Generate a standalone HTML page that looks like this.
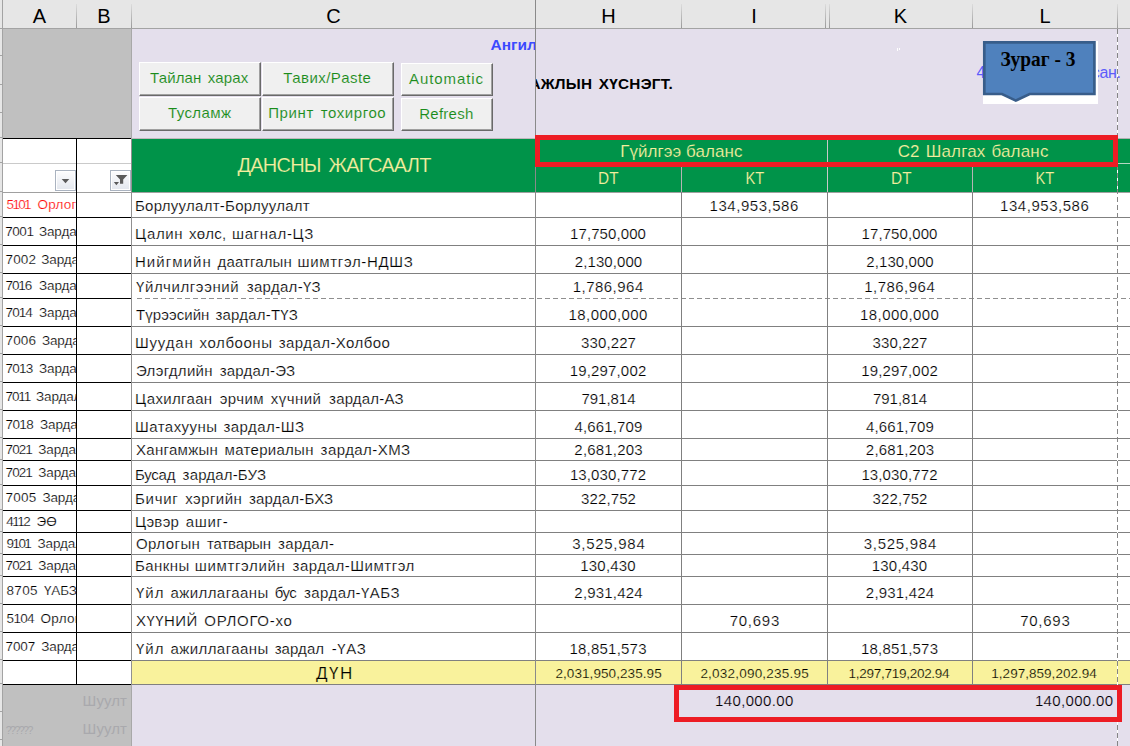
<!DOCTYPE html>
<html lang="mn"><head><meta charset="utf-8"><title>Дансны жагсаалт</title>
<style>
html,body{margin:0;padding:0;background:#fff}
body{width:1130px;height:746px;overflow:hidden;position:relative;font-family:"Liberation Sans",sans-serif;font-size:15px;color:#000}
#s{position:absolute;left:0;top:0;width:1130px;height:746px;overflow:hidden;background:#fff}
#s div,#s span{position:absolute;white-space:pre}
.h{background:#808080;height:1px}
.v{background:#808080;width:1px}
.k{background:#000}

.ch{top:3.4px;height:26px;line-height:26px;font-size:20px;text-align:center;color:#000}
.sep{top:4px;height:24px;width:1px;background:linear-gradient(#dcdcdc,#9a9a9a)}
.a{-webkit-text-stroke:.2px #fff;left:3px;width:73px;overflow:hidden;font-size:13.5px;height:18px;line-height:18px}
.btn{background:#f0f0f0;box-sizing:border-box;border-top:1px solid #fff;border-left:1px solid #fff;border-right:1px solid #696969;border-bottom:1px solid #696969;box-shadow:inset -1px -1px 0 #a0a0a0}
.bt{color:#1a8c1a;-webkit-text-stroke:.1px #f0f0f0}
.gh{color:#f3ee9e;-webkit-text-stroke:.15px #009349}
.tw{-webkit-text-stroke:.2px #fff}
.ty{-webkit-text-stroke:.2px #f9f29c}
.tp{-webkit-text-stroke:.2px #e4dfec}
</style></head><body><div id="s">

<div style="left:0;top:0;width:1130px;height:28px;background:#e6e6e6"></div>
<div style="left:0;top:28px;width:1130px;height:1px;background:#a3a3a3"></div>
<div style="left:0;top:29px;width:2px;height:717px;background:#e6e6e6"></div>
<div style="left:2px;top:0;width:1px;height:746px;background:#a3a3a3"></div>
<div style="left:0;top:55px;width:2px;height:1px;background:#a3a3a3"></div>
<div style="left:0;top:84px;width:2px;height:1px;background:#a3a3a3"></div>
<div style="left:0;top:112px;width:2px;height:1px;background:#a3a3a3"></div>
<div style="left:0;top:137px;width:2px;height:1px;background:#a3a3a3"></div>
<div style="left:0;top:162px;width:2px;height:1px;background:#a3a3a3"></div>
<div style="left:0;top:191px;width:2px;height:1px;background:#a3a3a3"></div>
<div style="left:0;top:216px;width:2px;height:1px;background:#a3a3a3"></div>
<div style="left:0;top:244px;width:2px;height:1px;background:#a3a3a3"></div>
<div style="left:0;top:272px;width:2px;height:1px;background:#a3a3a3"></div>
<div style="left:0;top:297px;width:2px;height:1px;background:#a3a3a3"></div>
<div style="left:0;top:325px;width:2px;height:1px;background:#a3a3a3"></div>
<div style="left:0;top:353px;width:2px;height:1px;background:#a3a3a3"></div>
<div style="left:0;top:381px;width:2px;height:1px;background:#a3a3a3"></div>
<div style="left:0;top:409px;width:2px;height:1px;background:#a3a3a3"></div>
<div style="left:0;top:437px;width:2px;height:1px;background:#a3a3a3"></div>
<div style="left:0;top:459px;width:2px;height:1px;background:#a3a3a3"></div>
<div style="left:0;top:484px;width:2px;height:1px;background:#a3a3a3"></div>
<div style="left:0;top:509px;width:2px;height:1px;background:#a3a3a3"></div>
<div style="left:0;top:531px;width:2px;height:1px;background:#a3a3a3"></div>
<div style="left:0;top:553px;width:2px;height:1px;background:#a3a3a3"></div>
<div style="left:0;top:575px;width:2px;height:1px;background:#a3a3a3"></div>
<div style="left:0;top:603px;width:2px;height:1px;background:#a3a3a3"></div>
<div style="left:0;top:631px;width:2px;height:1px;background:#a3a3a3"></div>
<div style="left:0;top:659px;width:2px;height:1px;background:#a3a3a3"></div>
<div style="left:0;top:683px;width:2px;height:1px;background:#a3a3a3"></div>
<div style="left:0;top:711px;width:2px;height:1px;background:#a3a3a3"></div>
<div style="left:0;top:739px;width:2px;height:1px;background:#a3a3a3"></div>
<div style="left:3px;top:29px;width:129px;height:109px;background:#c0c0c0"></div>
<div style="left:3px;top:685px;width:129px;height:61px;background:#c0c0c0"></div>
<div style="left:132px;top:29px;width:998px;height:110px;background:#e4dfec"></div>
<div style="left:132px;top:685px;width:998px;height:61px;background:#e4dfec"></div>
<div class="ch" style="left:3px;width:73px">A</div>
<div class="ch" style="left:77px;width:54px">B</div>
<div class="ch" style="left:132px;width:403px">C</div>
<div class="ch" style="left:536px;width:145px">H</div>
<div class="ch" style="left:682px;width:144px">I</div>
<div class="ch" style="left:829px;width:143px">K</div>
<div class="ch" style="left:973px;width:144px">L</div>
<div class="sep" style="left:76px"></div>
<div class="sep" style="left:131px"></div>
<div class="sep" style="left:681px"></div>
<div class="sep" style="left:825px"></div>
<div class="sep" style="left:829px"></div>
<div class="sep" style="left:972px"></div>
<div class="sep" style="left:1117px"></div>
<div style="left:132px;top:139px;width:998px;height:53px;background:#009349"></div>
<div class="gh" style="left:237.45px;top:153px;height:24px;line-height:24px;font-size:20px;letter-spacing:-0.769px;word-spacing:3px;">ДАНСНЫ ЖАГСААЛТ</div>
<div class="gh" style="left:620.20px;top:142px;height:20px;line-height:20px;font-size:17px;letter-spacing:0.065px;">Гүйлгээ баланс</div>
<div class="gh" style="left:897.65px;top:142px;height:20px;line-height:20px;font-size:17px;letter-spacing:0.188px;word-spacing:1px;">С2 Шалгах баланс</div>
<div class="gh" style="left:597.17px;top:168.5px;height:20px;line-height:20px;font-size:17px;transform:scaleX(0.902)">DT</div>
<div class="gh" style="left:743.64px;top:168.5px;height:20px;line-height:20px;font-size:17px;transform:scaleX(0.865)">KT</div>
<div class="gh" style="left:889.67px;top:168.5px;height:20px;line-height:20px;font-size:17px;transform:scaleX(0.902)">DT</div>
<div class="gh" style="left:1034.34px;top:168.5px;height:20px;line-height:20px;font-size:17px;transform:scaleX(0.865)">KT</div>
<div style="left:681px;top:167px;width:1px;height:25px;background:#b4b4b4"></div>
<div style="left:972px;top:167px;width:1px;height:25px;background:#b4b4b4"></div>
<div style="left:827px;top:140px;width:1px;height:52px;background:#c8c8c8"></div>
<div style="left:1118px;top:163px;width:12px;height:1px;background:#b4d8c2"></div>
<div style="left:1118px;top:138px;width:12px;height:1px;background:#b0b0b0"></div>
<div style="left:132px;top:661px;width:998px;height:23px;background:#f9f29c"></div>
<div style="left:3px;top:163px;width:128px;height:1px;background:#cacaca"></div>
<div class="k" style="left:3px;top:192px;width:129px;height:1px;background:#a0a0a0"></div>
<div class="h" style="left:132px;top:192px;width:998px;background:#a0a0a0"></div>
<div class="k" style="left:3px;top:217px;width:129px;height:1px"></div>
<div class="h" style="left:132px;top:217px;width:998px"></div>
<div class="k" style="left:3px;top:245px;width:129px;height:1px"></div>
<div class="h" style="left:132px;top:245px;width:998px"></div>
<div class="k" style="left:3px;top:273px;width:129px;height:1px"></div>
<div class="h" style="left:132px;top:273px;width:998px"></div>
<div class="k" style="left:3px;top:298px;width:129px;height:1px"></div>
<div style="left:137px;top:298px;width:993px;height:1px;background:repeating-linear-gradient(90deg,#8f8f8f 0 5px,#fff 5px 8px)"></div>
<div class="k" style="left:3px;top:326px;width:129px;height:1px"></div>
<div class="h" style="left:132px;top:326px;width:998px"></div>
<div class="k" style="left:3px;top:354px;width:129px;height:1px"></div>
<div class="h" style="left:132px;top:354px;width:998px"></div>
<div class="k" style="left:3px;top:382px;width:129px;height:1px"></div>
<div class="h" style="left:132px;top:382px;width:998px"></div>
<div class="k" style="left:3px;top:410px;width:129px;height:1px"></div>
<div class="h" style="left:132px;top:410px;width:998px"></div>
<div class="k" style="left:3px;top:438px;width:129px;height:1px"></div>
<div class="h" style="left:132px;top:438px;width:998px"></div>
<div class="k" style="left:3px;top:460px;width:129px;height:1px"></div>
<div class="h" style="left:132px;top:460px;width:998px"></div>
<div class="k" style="left:3px;top:485px;width:129px;height:1px"></div>
<div class="h" style="left:132px;top:485px;width:998px"></div>
<div class="k" style="left:3px;top:510px;width:129px;height:1px"></div>
<div class="h" style="left:132px;top:510px;width:998px"></div>
<div class="k" style="left:3px;top:532px;width:129px;height:1px"></div>
<div class="h" style="left:132px;top:532px;width:998px"></div>
<div class="k" style="left:3px;top:554px;width:129px;height:1px"></div>
<div class="h" style="left:132px;top:554px;width:998px"></div>
<div class="k" style="left:3px;top:576px;width:129px;height:1px"></div>
<div class="h" style="left:132px;top:576px;width:998px"></div>
<div class="k" style="left:3px;top:604px;width:129px;height:1px"></div>
<div class="h" style="left:132px;top:604px;width:998px"></div>
<div class="k" style="left:3px;top:632px;width:129px;height:1px"></div>
<div class="h" style="left:132px;top:632px;width:998px"></div>
<div class="k" style="left:3px;top:660px;width:129px;height:1px"></div>
<div class="h" style="left:132px;top:660px;width:998px"></div>
<div class="k" style="left:3px;top:684px;width:129px;height:1px"></div>
<div class="h" style="left:132px;top:684px;width:998px"></div>
<div class="k" style="left:3px;top:138px;width:128px;height:1px"></div>
<div style="left:132px;top:138px;width:403px;height:1px;background:#bfb8bc"></div>
<div style="left:897px;top:48px;width:1px;height:3px;background:#fff"></div>
<div style="left:899px;top:48px;width:1px;height:2px;background:#fff"></div>
<div class="k" style="left:76px;top:138px;width:1px;height:547px"></div>
<div style="left:131px;top:29px;width:1px;height:717px;background:#a8a8a8"></div>
<div style="left:131px;top:139px;width:1px;height:546px;background:#909090"></div>
<div class="v" style="left:535px;top:0;height:746px;background:#8a8a8a"></div>
<div class="v" style="left:681px;top:192px;height:493px"></div>
<div class="v" style="left:827px;top:192px;height:493px"></div>
<div class="v" style="left:972px;top:192px;height:493px"></div>
<div style="left:1117px;top:29px;width:1px;height:717px;background:repeating-linear-gradient(180deg,#858585 0 5px,#fff 5px 8px)"></div>
<div class="a" style="top:196.3px;color:#ff0a0a"><span style="left:3.60px;top:0;letter-spacing:-1.708px">5101</span> <span style="left:34.40px;top:0;letter-spacing:0.25px">Орлого</span></div>
<div class="tw" style="left:0;top:195.7px;height:20px;line-height:20px;font-size:15px"><span style="left:135.00px;top:0;letter-spacing:0.268px">Борлуулалт-Борлуулалт</span></div>
<div class="tw" style="left:709.60px;top:195.7px;height:20px;line-height:20px;font-size:15px;letter-spacing:0.533px;">134,953,586</div>
<div class="tw" style="left:1000.10px;top:195.7px;height:20px;line-height:20px;font-size:15px;letter-spacing:0.533px;">134,953,586</div>
<div class="a" style="top:222.8px;color:#000"><span style="left:2.20px;top:0;letter-spacing:-0.441px">7001</span> <span style="left:36.00px;top:0;letter-spacing:-0.15px">Зардал</span></div>
<div class="tw" style="left:0;top:223.7px;height:20px;line-height:20px;font-size:15px"><span style="left:135.00px;top:0;letter-spacing:0.600px">Цалин</span> <span style="left:188.90px;top:0;letter-spacing:0.251px">хөлс,</span> <span style="left:232.00px;top:0;letter-spacing:0.610px">шагнал-ЦЗ</span></div>
<div class="tw" style="left:570.00px;top:223.7px;height:20px;line-height:20px;font-size:15px;letter-spacing:0.097px;">17,750,000</div>
<div class="tw" style="left:861.50px;top:223.7px;height:20px;line-height:20px;font-size:15px;letter-spacing:0.097px;">17,750,000</div>
<div class="a" style="top:250.8px;color:#000"><span style="left:2.60px;top:0;letter-spacing:0.092px">7002</span> <span style="left:38.30px;top:0;letter-spacing:-0.15px">Зардал</span></div>
<div class="tw" style="left:0;top:251.7px;height:20px;line-height:20px;font-size:15px"><span style="left:135.00px;top:0;letter-spacing:1.038px">Нийгмийн</span> <span style="left:217.60px;top:0;letter-spacing:0.101px">даатгалын</span> <span style="left:297.60px;top:0;letter-spacing:0.657px">шимтгэл-НДШЗ</span></div>
<div class="tw" style="left:574.80px;top:251.7px;height:20px;line-height:20px;font-size:15px;letter-spacing:0.076px;">2,130,000</div>
<div class="tw" style="left:866.30px;top:251.7px;height:20px;line-height:20px;font-size:15px;letter-spacing:0.076px;">2,130,000</div>
<div class="a" style="top:277.3px;color:#000"><span style="left:2.60px;top:0;letter-spacing:-1.141px">7016</span> <span style="left:36.10px;top:0;letter-spacing:-0.15px">Зардал</span></div>
<div class="tw" style="left:0;top:276.7px;height:20px;line-height:20px;font-size:15px"><span style="left:136.00px;top:0;letter-spacing:0.615px">Үйлчилгээний</span> <span style="left:246.80px;top:0;letter-spacing:0.300px">зардал-ҮЗ</span></div>
<div class="tw" style="left:572.70px;top:276.7px;height:20px;line-height:20px;font-size:15px;letter-spacing:0.476px;">1,786,964</div>
<div class="tw" style="left:864.20px;top:276.7px;height:20px;line-height:20px;font-size:15px;letter-spacing:0.476px;">1,786,964</div>
<div class="a" style="top:303.8px;color:#000"><span style="left:2.60px;top:0;letter-spacing:-0.975px">7014</span> <span style="left:36.10px;top:0;letter-spacing:-0.15px">Зардал</span></div>
<div class="tw" style="left:0;top:304.7px;height:20px;line-height:20px;font-size:15px"><span style="left:136.00px;top:0;letter-spacing:0.066px">Түрээсийн</span> <span style="left:215.50px;top:0;letter-spacing:0.193px">зардал-ТҮЗ</span></div>
<div class="tw" style="left:568.60px;top:304.7px;height:20px;line-height:20px;font-size:15px;letter-spacing:0.408px;">18,000,000</div>
<div class="tw" style="left:860.10px;top:304.7px;height:20px;line-height:20px;font-size:15px;letter-spacing:0.408px;">18,000,000</div>
<div class="a" style="top:331.8px;color:#000"><span style="left:2.60px;top:0;letter-spacing:0.092px">7006</span> <span style="left:39.00px;top:0;letter-spacing:-0.15px">Зардал</span></div>
<div class="tw" style="left:0;top:332.7px;height:20px;line-height:20px;font-size:15px"><span style="left:135.00px;top:0;letter-spacing:0.811px">Шуудан</span> <span style="left:199.60px;top:0;letter-spacing:0.563px">холбооны</span> <span style="left:278.70px;top:0;letter-spacing:0.442px">зардал-Холбоо</span></div>
<div class="tw" style="left:581.00px;top:332.7px;height:20px;line-height:20px;font-size:15px;letter-spacing:0.120px;">330,227</div>
<div class="tw" style="left:872.50px;top:332.7px;height:20px;line-height:20px;font-size:15px;letter-spacing:0.120px;">330,227</div>
<div class="a" style="top:359.8px;color:#000"><span style="left:2.60px;top:0;letter-spacing:-0.808px">7013</span> <span style="left:36.10px;top:0;letter-spacing:-0.15px">Зардал</span></div>
<div class="tw" style="left:0;top:360.7px;height:20px;line-height:20px;font-size:15px"><span style="left:136.00px;top:0;letter-spacing:0.319px">Элэгдлийн</span> <span style="left:219.70px;top:0;letter-spacing:0.216px">зардал-ЭЗ</span></div>
<div class="tw" style="left:569.70px;top:360.7px;height:20px;line-height:20px;font-size:15px;letter-spacing:0.163px;">19,297,002</div>
<div class="tw" style="left:861.20px;top:360.7px;height:20px;line-height:20px;font-size:15px;letter-spacing:0.163px;">19,297,002</div>
<div class="a" style="top:387.8px;color:#000"><span style="left:2.60px;top:0;letter-spacing:-1.141px">7011</span> <span style="left:33.10px;top:0;letter-spacing:-0.15px">Зардал</span></div>
<div class="tw" style="left:0;top:388.7px;height:20px;line-height:20px;font-size:15px"><span style="left:135.00px;top:0;letter-spacing:0.322px">Цахилгаан</span> <span style="left:219.70px;top:0;letter-spacing:0.435px">эрчим</span> <span style="left:270.70px;top:0;letter-spacing:0.484px">хүчний</span> <span style="left:329.10px;top:0;letter-spacing:0.175px">зардал-АЗ</span></div>
<div class="tw" style="left:581.40px;top:388.7px;height:20px;line-height:20px;font-size:15px;letter-spacing:-0.013px;">791,814</div>
<div class="tw" style="left:872.90px;top:388.7px;height:20px;line-height:20px;font-size:15px;letter-spacing:-0.013px;">791,814</div>
<div class="a" style="top:415.8px;color:#000"><span style="left:2.60px;top:0;letter-spacing:-0.641px">7018</span> <span style="left:37.10px;top:0;letter-spacing:-0.15px">Зардал</span></div>
<div class="tw" style="left:0;top:416.7px;height:20px;line-height:20px;font-size:15px"><span style="left:135.00px;top:0;letter-spacing:0.464px">Шатахууны</span> <span style="left:223.40px;top:0;letter-spacing:0.462px">зардал-ШЗ</span></div>
<div class="tw" style="left:574.55px;top:416.7px;height:20px;line-height:20px;font-size:15px;letter-spacing:0.139px;">4,661,709</div>
<div class="tw" style="left:866.05px;top:416.7px;height:20px;line-height:20px;font-size:15px;letter-spacing:0.139px;">4,661,709</div>
<div class="a" style="top:440.8px;color:#000"><span style="left:2.60px;top:0;letter-spacing:-0.975px">7021</span> <span style="left:35.30px;top:0;letter-spacing:-0.15px">Зардал</span></div>
<div class="tw" style="left:0;top:439.5px;height:20px;line-height:20px;font-size:15px"><span style="left:136.00px;top:0;letter-spacing:0.295px">Хангамжын</span> <span style="left:224.60px;top:0;letter-spacing:0.293px">материалын</span> <span style="left:320.60px;top:0;letter-spacing:0.438px">зардал-ХМЗ</span></div>
<div class="tw" style="left:574.35px;top:439.5px;height:20px;line-height:20px;font-size:15px;letter-spacing:0.189px;">2,681,203</div>
<div class="tw" style="left:865.85px;top:439.5px;height:20px;line-height:20px;font-size:15px;letter-spacing:0.189px;">2,681,203</div>
<div class="a" style="top:464.3px;color:#000"><span style="left:2.60px;top:0;letter-spacing:-0.975px">7021</span> <span style="left:35.30px;top:0;letter-spacing:-0.15px">Зардал</span></div>
<div class="tw" style="left:0;top:464.5px;height:20px;line-height:20px;font-size:15px"><span style="left:135.00px;top:0;letter-spacing:-0.247px">Бусад</span> <span style="left:182.60px;top:0;letter-spacing:0.171px">зардал-БУЗ</span></div>
<div class="tw" style="left:569.90px;top:464.5px;height:20px;line-height:20px;font-size:15px;letter-spacing:0.119px;">13,030,772</div>
<div class="tw" style="left:861.40px;top:464.5px;height:20px;line-height:20px;font-size:15px;letter-spacing:0.119px;">13,030,772</div>
<div class="a" style="top:489.3px;color:#000"><span style="left:2.60px;top:0;letter-spacing:0.225px">7005</span> <span style="left:39.50px;top:0;letter-spacing:-0.15px">Зардал</span></div>
<div class="tw" style="left:0;top:488.7px;height:20px;line-height:20px;font-size:15px"><span style="left:135.00px;top:0;letter-spacing:0.721px">Бичиг</span> <span style="left:185.20px;top:0;letter-spacing:0.429px">хэргийн</span> <span style="left:248.90px;top:0;letter-spacing:0.217px">зардал-БХЗ</span></div>
<div class="tw" style="left:581.00px;top:488.7px;height:20px;line-height:20px;font-size:15px;letter-spacing:0.120px;">322,752</div>
<div class="tw" style="left:872.50px;top:488.7px;height:20px;line-height:20px;font-size:15px;letter-spacing:0.120px;">322,752</div>
<div class="a" style="top:512.8px;color:#000"><span style="left:3.20px;top:0;letter-spacing:-1.507px">4112</span> <span style="left:33.60px;top:0;letter-spacing:-0.15px">ЭӨ</span></div>
<div class="tw" style="left:0;top:511.5px;height:20px;line-height:20px;font-size:15px"><span style="left:135.00px;top:0;letter-spacing:0.307px">Цэвэр</span> <span style="left:185.70px;top:0;letter-spacing:0.693px">ашиг-</span></div>
<div class="a" style="top:534.8px;color:#000"><span style="left:3.60px;top:0;letter-spacing:-1.608px">9101</span> <span style="left:34.60px;top:0;letter-spacing:-0.15px">Зардал</span></div>
<div class="tw" style="left:0;top:533.5px;height:20px;line-height:20px;font-size:15px"><span style="left:136.00px;top:0;letter-spacing:0.431px">Орлогын</span> <span style="left:207.00px;top:0;letter-spacing:-0.164px">татварын</span> <span style="left:278.10px;top:0;letter-spacing:0.289px">зардал-</span></div>
<div class="tw" style="left:572.15px;top:533.5px;height:20px;line-height:20px;font-size:15px;letter-spacing:0.739px;">3,525,984</div>
<div class="tw" style="left:863.65px;top:533.5px;height:20px;line-height:20px;font-size:15px;letter-spacing:0.739px;">3,525,984</div>
<div class="a" style="top:556.8px;color:#000"><span style="left:2.60px;top:0;letter-spacing:-0.975px">7021</span> <span style="left:35.30px;top:0;letter-spacing:-0.15px">Зардал</span></div>
<div class="tw" style="left:0;top:555.5px;height:20px;line-height:20px;font-size:15px"><span style="left:135.00px;top:0;letter-spacing:0.417px">Банкны</span> <span style="left:194.80px;top:0;letter-spacing:0.644px">шимтгэлийн</span> <span style="left:292.50px;top:0;letter-spacing:0.526px">зардал-Шимтгэл</span></div>
<div class="tw" style="left:580.30px;top:555.5px;height:20px;line-height:20px;font-size:15px;letter-spacing:0.187px;">130,430</div>
<div class="tw" style="left:871.80px;top:555.5px;height:20px;line-height:20px;font-size:15px;letter-spacing:0.187px;">130,430</div>
<div class="a" style="top:581.8px;color:#000"><span style="left:3.60px;top:0;letter-spacing:0.259px">8705</span> <span style="left:41.00px;top:0;letter-spacing:-0.15px">ҮАБЗ</span></div>
<div class="tw" style="left:0;top:582.7px;height:20px;line-height:20px;font-size:15px"><span style="left:136.00px;top:0;letter-spacing:0.989px">Үйл</span> <span style="left:170.40px;top:0;letter-spacing:0.439px">ажиллагааны</span> <span style="left:274.70px;top:0;letter-spacing:-0.547px">бус</span> <span style="left:303.90px;top:0;letter-spacing:0.442px">зардал-ҮАБЗ</span></div>
<div class="tw" style="left:574.35px;top:582.7px;height:20px;line-height:20px;font-size:15px;letter-spacing:0.189px;">2,931,424</div>
<div class="tw" style="left:865.85px;top:582.7px;height:20px;line-height:20px;font-size:15px;letter-spacing:0.189px;">2,931,424</div>
<div class="a" style="top:609.8px;color:#000"><span style="left:3.60px;top:0;letter-spacing:-0.708px">5104</span> <span style="left:37.60px;top:0;letter-spacing:0.25px">Орлого</span></div>
<div class="tw" style="left:0;top:610.7px;height:20px;line-height:20px;font-size:15px"><span style="left:136.00px;top:0;letter-spacing:0.419px">ХҮҮНИЙ</span> <span style="left:204.30px;top:0;letter-spacing:0.686px">ОРЛОГО-хо</span></div>
<div class="tw" style="left:729.65px;top:610.7px;height:20px;line-height:20px;font-size:15px;letter-spacing:0.753px;">70,693</div>
<div class="tw" style="left:1020.15px;top:610.7px;height:20px;line-height:20px;font-size:15px;letter-spacing:0.753px;">70,693</div>
<div class="a" style="top:637.8px;color:#000"><span style="left:2.60px;top:0;letter-spacing:-0.141px">7007</span> <span style="left:38.30px;top:0;letter-spacing:-0.15px">Зардал</span></div>
<div class="tw" style="left:0;top:638.7px;height:20px;line-height:20px;font-size:15px"><span style="left:136.00px;top:0;letter-spacing:0.989px">Үйл</span> <span style="left:170.40px;top:0;letter-spacing:0.439px">ажиллагааны</span> <span style="left:274.70px;top:0;letter-spacing:0.058px">зардал</span> <span style="left:331.80px;top:0;letter-spacing:0.575px">-ҮАЗ</span></div>
<div class="tw" style="left:569.45px;top:638.7px;height:20px;line-height:20px;font-size:15px;letter-spacing:0.219px;">18,851,573</div>
<div class="tw" style="left:860.95px;top:638.7px;height:20px;line-height:20px;font-size:15px;letter-spacing:0.219px;">18,851,573</div>
<div class="ty" style="left:316.00px;top:664px;height:20px;line-height:20px;font-size:17px;letter-spacing:1.516px;">ДҮН</div>
<div class="ty" style="left:555.45px;top:665px;height:18px;line-height:18px;font-size:13.5px;letter-spacing:0.074px;">2,031,950,235.95</div>
<div class="ty" style="left:700.40px;top:665px;height:18px;line-height:18px;font-size:13.5px;letter-spacing:0.214px;">2,032,090,235.95</div>
<div class="ty" style="left:848.50px;top:665px;height:18px;line-height:18px;font-size:13.5px;letter-spacing:-0.266px;">1,297,719,202.94</div>
<div class="ty" style="left:991.30px;top:665px;height:18px;line-height:18px;font-size:13.5px;letter-spacing:0.027px;">1,297,859,202.94</div>
<div class="tp" style="left:715.10px;top:691px;height:20px;line-height:20px;font-size:15px;letter-spacing:0.341px;">140,000.00</div>
<div class="tp" style="left:1034.90px;top:691px;height:20px;line-height:20px;font-size:15px;letter-spacing:0.341px;">140,000.00</div>
<div class="" style="left:82.60px;top:691px;height:20px;line-height:20px;font-size:15px;letter-spacing:0.082px;color:#a9a9ad;">Шуулт</div>
<div class="" style="left:82.60px;top:719px;height:20px;line-height:20px;font-size:15px;letter-spacing:0.082px;color:#a9a9ad;">Шуулт</div>
<div class="" style="left:5.80px;top:723.4px;height:14px;line-height:14px;font-size:10.5px;letter-spacing:-1.520px;color:#a9a9ad;">??????</div>
<div style="left:535px;top:135px;width:583px;height:32px;box-sizing:border-box;border:5px solid #ed1c24"></div>
<div style="left:674px;top:685px;width:448px;height:37px;box-sizing:border-box;border:5px solid #ed1c24"></div>
<div class="btn" style="left:139px;top:62px;width:122px;height:34px"></div>
<div class="bt" style="left:150.05px;top:68.4px;height:20px;line-height:20px;font-size:15px;letter-spacing:0.144px;word-spacing:2px;">Тайлан харах</div>
<div class="btn" style="left:139px;top:97px;width:122px;height:34px"></div>
<div class="bt" style="left:167.90px;top:103.4px;height:20px;line-height:20px;font-size:15px;letter-spacing:0.440px;">Тусламж</div>
<div class="btn" style="left:262px;top:62px;width:132px;height:34px"></div>
<div class="bt" style="left:283.30px;top:68.4px;height:20px;line-height:20px;font-size:15px;letter-spacing:0.434px;">Тавих/Paste</div>
<div class="btn" style="left:262px;top:97px;width:132px;height:34px"></div>
<div class="bt" style="left:268.25px;top:103.4px;height:20px;line-height:20px;font-size:15px;letter-spacing:0.592px;word-spacing:2px;">Принт тохиргоо</div>
<div class="btn" style="left:401px;top:63px;width:92px;height:33px"></div>
<div class="bt" style="left:409.00px;top:68.9px;height:20px;line-height:20px;font-size:15px;letter-spacing:0.926px;">Automatic</div>
<div class="btn" style="left:401px;top:98px;width:92px;height:33px"></div>
<div class="bt" style="left:419.25px;top:103.9px;height:20px;line-height:20px;font-size:15px;letter-spacing:0.253px;">Refresh</div>
<div style="left:440px;top:29px;width:95px;height:30px;overflow:hidden">
<div class="" style="left:50.60px;top:6.0px;height:20px;line-height:20px;font-size:15.5px;letter-spacing:-0.034px;font-weight:bold;color:#3b4bff;">Ангилал</div>
</div>
<div style="left:536px;top:70px;width:150px;height:28px;overflow:hidden">
<div class="" style="left:-6.60px;top:3.9px;height:20px;line-height:20px;font-size:15.3px;letter-spacing:0.257px;word-spacing:2px;font-weight:bold;">АЖЛЫН ХҮСНЭГТ.</div>
</div>
<div style="left:976px;top:58px;width:160px;height:30px;overflow:hidden">
<div class="" style="left:0.40px;top:5.0px;height:20px;line-height:20px;font-size:16px;letter-spacing:-0.271px;color:#5c5cfa;">4 сард тайлагнасан.</div>
</div>
<svg style="position:absolute;left:980px;top:38px" width="122" height="70" viewBox="980 38 122 70">
<rect x="983" y="41" width="115" height="63" fill="#fff"/>
<path d="M984.3 42.3H1094.4V94H1029.6L1015.8 100.6L1002 94H984.3Z" fill="#4f81bd" stroke="#385d8a" stroke-width="2.7" stroke-linejoin="miter"/>
<text x="1000.4" y="66.4" textLength="75" lengthAdjust="spacingAndGlyphs" font-family="Liberation Serif, serif" font-weight="bold" font-size="21" fill="#000">Зураг - 3</text>
</svg>
<div style="left:55px;top:170px;width:21px;height:21px;box-sizing:border-box;border:1px solid #aab3c0;box-shadow:inset 0 0 0 1px #fff;background:linear-gradient(#fdfdfe,#e3e7ee)"></div>
<div style="left:110px;top:170px;width:21px;height:21px;box-sizing:border-box;border:1px solid #aab3c0;box-shadow:inset 0 0 0 1px #fff;background:linear-gradient(#fdfdfe,#e3e7ee)"></div>
<svg style="position:absolute;left:55px;top:170px" width="21" height="21"><path d="M6.7 9h7.6l-3.8 4.3z" fill="#5a5a5a"/></svg>
<svg style="position:absolute;left:110px;top:170px" width="21" height="21"><path d="M5.8 5h11.6l-4.2 4.4v4.4h-3.2v-4.4z" fill="#5a5a5a"/><path d="M3.8 12h5.2l-2.6 3.2z" fill="#5a5a5a"/></svg>
</div></body></html>
